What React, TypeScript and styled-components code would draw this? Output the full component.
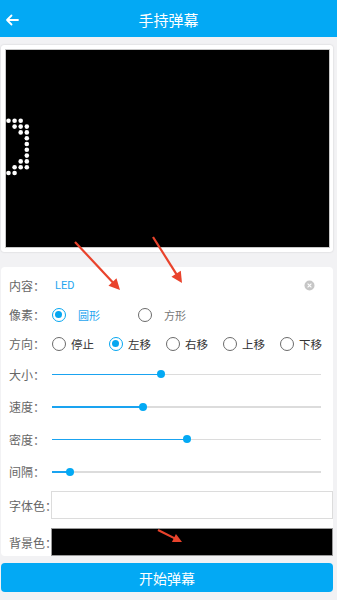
import React from "react";
import styled, { createGlobalStyle } from "styled-components";

const Global = createGlobalStyle`
  html, body { margin: 0; padding: 0; background: #f2f2f4; }
  body { font-family: "Noto Sans CJK SC", "Noto Sans", Roboto, sans-serif; }
  * { box-sizing: border-box; }
`;

const Page = styled.div`
  position: relative;
  width: 337px;
  height: 600px;
  background: #f2f2f4;
  display: flex;
  flex-direction: column;
  overflow: hidden;
`;

const Header = styled.header`
  height: 37px;
  background: #03a9f4;
  display: grid;
  grid-template-columns: 40px 1fr 40px;
  align-items: center;
  color: #fff;
  padding-top: 2px;
`;

const BackBtn = styled.div`
  display: flex;
  align-items: center;
  padding-left: 5px;
  height: 100%;
`;

const Title = styled.h1`
  margin: 0;
  font-size: 15px;
  font-weight: 400;
  text-align: center;
  line-height: 20px;
`;

const Body = styled.main`
  display: flex;
  flex-direction: column;
  padding: 8px 4px 0 1px;
`;

const DisplayCard = styled.section`
  background: #fff;
  border-radius: 3px;
  box-shadow: 0 0 2px rgba(0, 0, 0, 0.18);
  padding: 4px 3px 4px 4px;
`;

const Screen = styled.div`
  position: relative;
  height: 199px;
  background: #000;
  border: 1px solid #c8c8c8;
  overflow: hidden;
`;

const DotLayer = styled.svg`
  position: absolute;
  left: 0;
  top: 0;
  width: 100%;
  height: 100%;
`;

const ControlCard = styled.section`
  margin-top: 15px;
  background: #fff;
  border-radius: 4px;
  padding-top: 4px;
  display: flex;
  flex-direction: column;
`;

const Row = styled.div<{ $h: number; $mt?: number }>`
  display: grid;
  grid-template-columns: 50px 1fr;
  align-items: center;
  height: ${(p) => p.$h}px;
  margin-top: ${(p) => p.$mt ?? 0}px;
`;

const Label = styled.span`
  padding-left: 8px;
  font-size: 12px;
  color: #666;
  white-space: nowrap;
`;

const ContentField = styled.div`
  display: flex;
  align-items: center;
  justify-content: space-between;
  padding: 0 18px 0 4px;
`;

const LedText = styled.span`
  font-family: Roboto, "Noto Sans", sans-serif;
  font-size: 11px;
  color: #1ea5ef;
`;

const Options = styled.div<{ $cols: string }>`
  display: grid;
  grid-template-columns: ${(p) => p.$cols};
  align-items: center;
  padding-left: 1px;
`;

const Option = styled.label<{ $gap: number }>`
  display: flex;
  align-items: center;
  gap: ${(p) => p.$gap}px;
`;

const RadioCircle = styled.span<{ $on: boolean }>`
  position: relative;
  width: 14px;
  height: 14px;
  border-radius: 50%;
  border: 1.3px solid ${(p) => (p.$on ? "#05a6f0" : "#6b6b6b")};
  flex: none;
  &::after {
    content: "";
    position: absolute;
    left: 2.2px;
    top: 2.2px;
    width: 7px;
    height: 7px;
    border-radius: 50%;
    background: ${(p) => (p.$on ? "#05a6f0" : "transparent")};
  }
`;

const OptText = styled.span<{ $tone: "blue" | "gray" | "dark" }>`
  font-size: ${(p) => (p.$tone === "dark" ? "11.5px" : "11px")};
  color: ${(p) => (p.$tone === "blue" ? "#1ea5ef" : p.$tone === "gray" ? "#777" : "#333")};
`;

const SliderWrap = styled.div`
  position: relative;
  height: 10px;
  margin: 0 12px 0 1px;
  display: flex;
  align-items: center;
`;

const Track = styled.div`
  position: relative;
  width: 100%;
  height: 1.5px;
  background: #dcdcdc;
`;

const Fill = styled.div`
  position: absolute;
  left: 0;
  top: 0;
  height: 100%;
  background: #1aa3f0;
`;

const Thumb = styled.div`
  position: absolute;
  top: 50%;
  width: 8px;
  height: 8px;
  margin: -4px 0 0 -4px;
  border-radius: 50%;
  background: #03a9f4;
`;

const ColorBox = styled.div<{ $bg: string; $border: string }>`
  height: 28px;
  background: ${(p) => p.$bg};
  border: 1px solid ${(p) => p.$border};
`;

const StartButton = styled.button`
  margin-top: 7px;
  height: 29px;
  border: none;
  border-radius: 4px;
  background: #03a9f4;
  color: #fff;
  font-family: inherit;
  font-size: 14px;
  padding: 0;
`;

const ArrowLayer = styled.svg`
  position: absolute;
  left: 0;
  top: 0;
  width: 337px;
  height: 600px;
  pointer-events: none;
`;

type Tone = "blue" | "gray" | "dark";

const Radio = ({ on, text, tone, gap }: { on: boolean; text: string; tone: Tone; gap: number }) => (
  <Option $gap={gap}>
    <RadioCircle $on={on} />
    <OptText $tone={tone}>{text}</OptText>
  </Option>
);

const Slider = ({ value }: { value: number }) => (
  <SliderWrap>
    <Track>
      <Fill style={{ width: `${value}%` }} />
      <Thumb style={{ left: `${value}%` }} />
    </Track>
  </SliderWrap>
);

const ledPattern = [
  [0, 1, 2],
  [1, 2, 3],
  [2, 3],
  [3],
  [3],
  [3],
  [3],
  [2, 3],
  [1, 2, 3],
  [0, 1],
];

const Arrow = ({ x1, y1, x2, y2, head = 10 }: { x1: number; y1: number; x2: number; y2: number; head?: number }) => {
  const dx = x2 - x1;
  const dy = y2 - y1;
  const len = Math.hypot(dx, dy);
  const ux = dx / len;
  const uy = dy / len;
  const bx = x2 - ux * head;
  const by = y2 - uy * head;
  const w = head * 0.5;
  const p1 = `${bx - uy * w},${by + ux * w}`;
  const p2 = `${bx + uy * w},${by - ux * w}`;
  return (
    <g>
      <line x1={x1} y1={y1} x2={bx + ux * 2} y2={by + uy * 2} stroke="#e9432c" strokeWidth={2.2} />
      <polygon points={`${x2},${y2} ${p1} ${p2}`} fill="#e9432c" />
    </g>
  );
};

export default function App() {
  return (
    <Page>
      <Global />
      <Header>
        <BackBtn>
          <svg width="14" height="14" viewBox="0 0 14 14" fill="none" stroke="#fff" strokeWidth="1.8" strokeLinecap="round" strokeLinejoin="round">
            <path d="M13 7H2M6.5 2.5L2 7l4.5 4.5" />
          </svg>
        </BackBtn>
        <Title>手持弹幕</Title>
        <span />
      </Header>
      <Body>
        <DisplayCard>
          <Screen>
            <DotLayer>
              {ledPattern.map((cols, r) =>
                cols.map((c) => (
                  <circle key={`${r}-${c}`} cx={2.5 + c * 6.1} cy={70.8 + r * 5.8} r={2.3} fill="#fff" />
                ))
              )}
            </DotLayer>
          </Screen>
        </DisplayCard>

        <ControlCard>
          <Row $h={29}>
            <Label>内容：</Label>
            <ContentField>
              <LedText>LED</LedText>
              <svg width="11" height="11" viewBox="0 0 11 11">
                <circle cx="5.5" cy="5.5" r="5" fill="#c6c6c6" />
                <path d="M3.6 3.6l3.8 3.8M7.4 3.6L3.6 7.4" stroke="#fff" strokeWidth="1.1" />
              </svg>
            </ContentField>
          </Row>
          <Row $h={29}>
            <Label>像素：</Label>
            <Options $cols="86px 80px">
              <Radio on text="圆形" tone="blue" gap={12} />
              <Radio on={false} text="方形" tone="gray" gap={12} />
            </Options>
          </Row>
          <Row $h={29}>
            <Label>方向：</Label>
            <Options $cols="57px 57px 57px 57px 57px">
              <Radio on={false} text="停止" tone="dark" gap={5} />
              <Radio on text="左移" tone="dark" gap={5} />
              <Radio on={false} text="右移" tone="dark" gap={5} />
              <Radio on={false} text="上移" tone="dark" gap={5} />
              <Radio on={false} text="下移" tone="dark" gap={5} />
            </Options>
          </Row>
          <Row $h={32.5}>
            <Label>大小：</Label>
            <Slider value={40.5} />
          </Row>
          <Row $h={32.5}>
            <Label>速度：</Label>
            <Slider value={33.7} />
          </Row>
          <Row $h={32.5}>
            <Label>密度：</Label>
            <Slider value={50} />
          </Row>
          <Row $h={32.5}>
            <Label>间隔：</Label>
            <Slider value={6.7} />
          </Row>
          <Row $h={28} $mt={3}>
            <Label>字体色：</Label>
            <ColorBox $bg="#fff" $border="#dcdcdc" />
          </Row>
          <Row $h={28} $mt={9}>
            <Label>背景色：</Label>
            <ColorBox $bg="#000" $border="#9a9a9a" />
          </Row>
        </ControlCard>

        <StartButton>开始弹幕</StartButton>
      </Body>

      <ArrowLayer viewBox="0 0 337 600">
        <Arrow x1={75} y1={242} x2={120} y2={290} head={11} />
        <Arrow x1={153} y1={237} x2={182} y2={283} head={11} />
        <Arrow x1={158} y1={530} x2={182} y2={542} head={9} />
      </ArrowLayer>
    </Page>
  );
}
